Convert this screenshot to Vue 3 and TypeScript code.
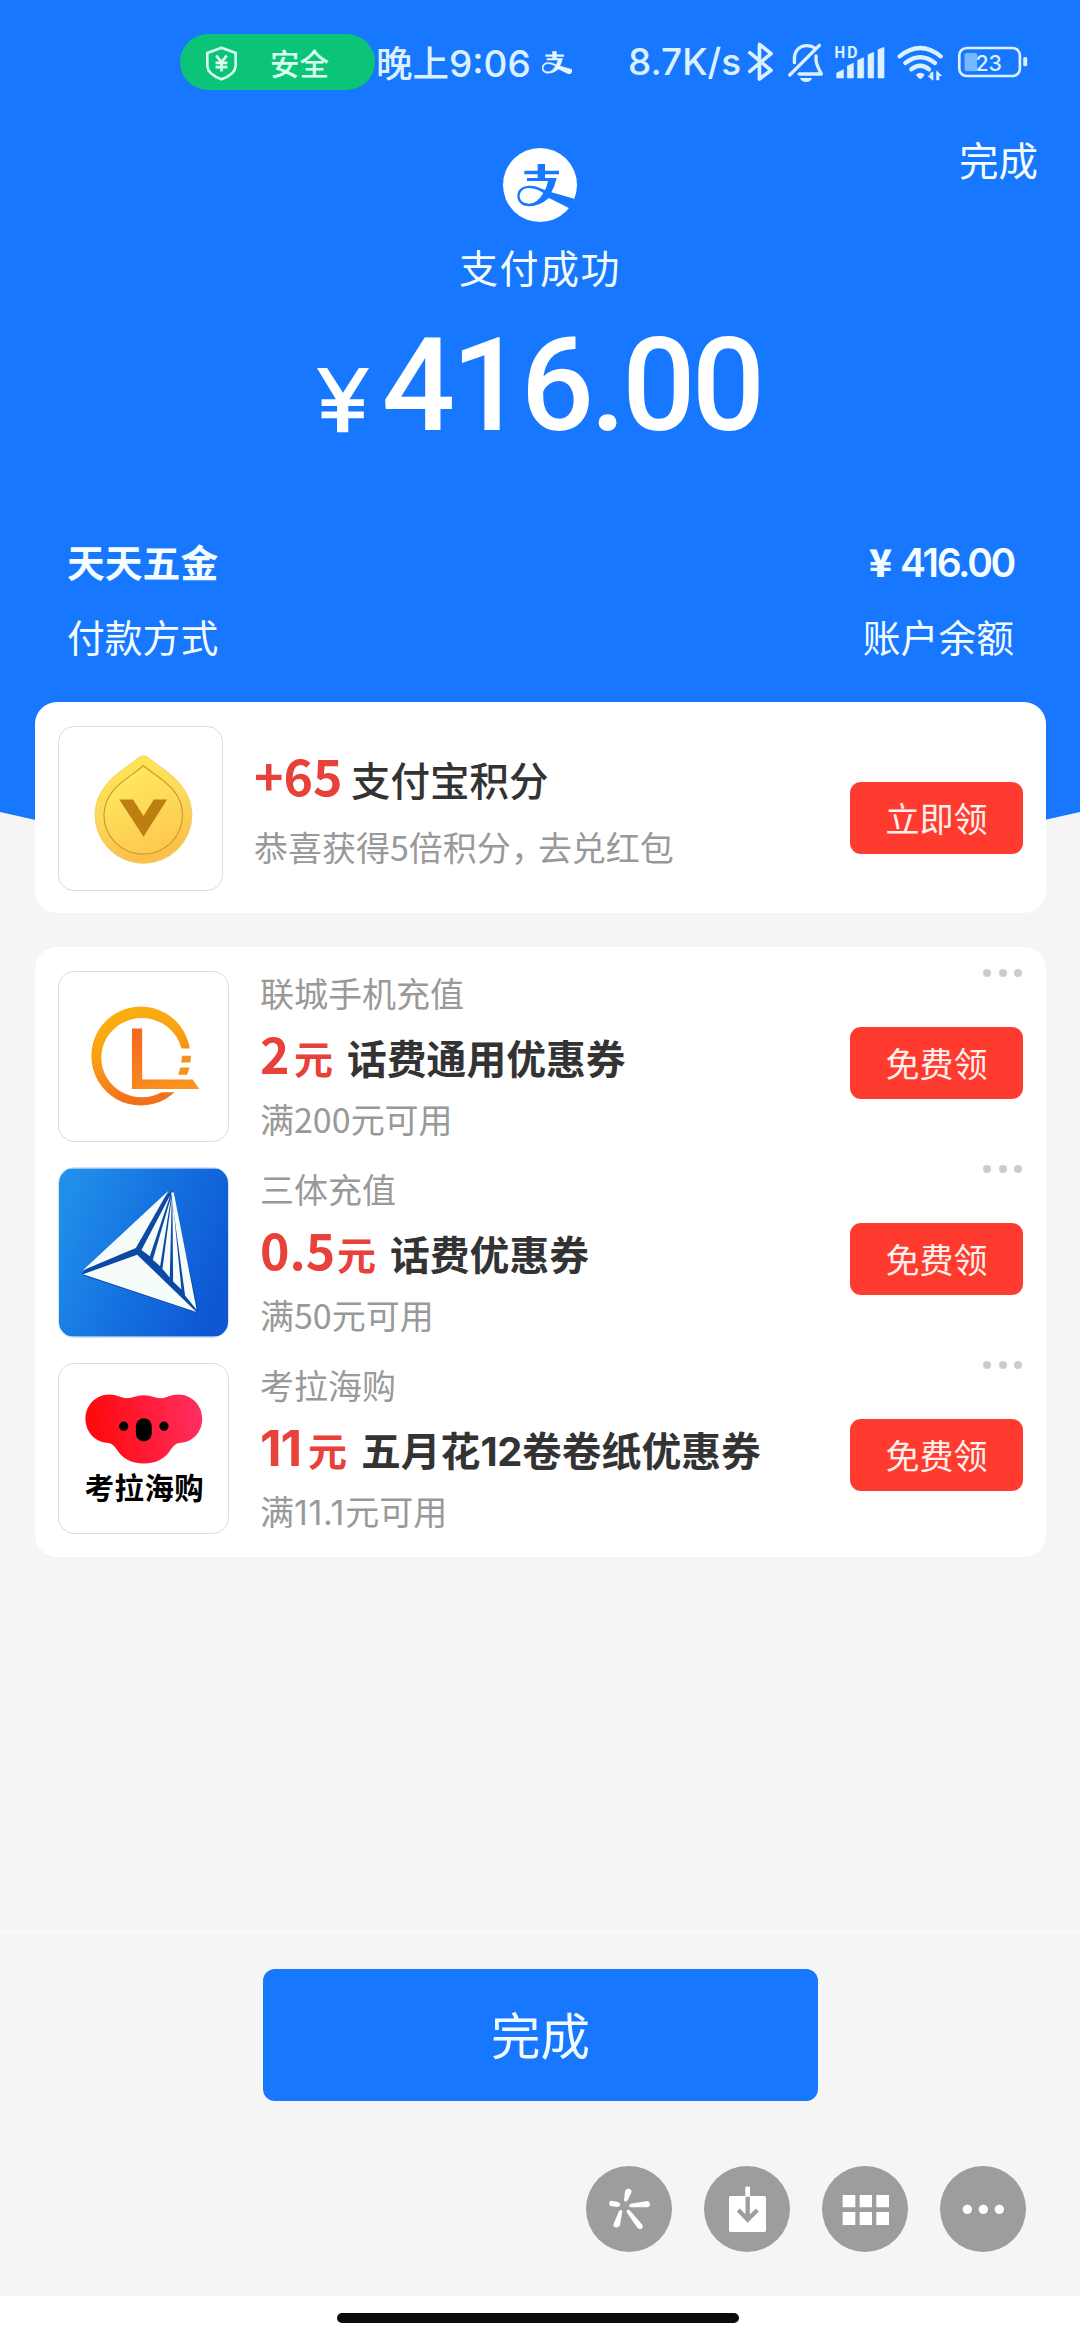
<script setup lang="ts">
interface Coupon {
  id: 'liancheng' | 'santi' | 'kaola'
  shop: string
  amount: string
  title: string
  rule: string
}

const coupons: Coupon[] = [
  { id: 'liancheng', shop: '联城手机充值', amount: '2', title: '话费通用优惠券', rule: '满200元可用' },
  { id: 'santi', shop: '三体充值', amount: '0.5', title: '话费优惠券', rule: '满50元可用' },
  { id: 'kaola', shop: '考拉海购', amount: '11', title: '五月花12卷卷纸优惠券', rule: '满11.1元可用' },
]

// Splits a label into runs so that numerals with a narrow "1" get their own face
const runs = (text: string): { text: string; narrow: boolean }[] =>
  text
    .split(/([\d.]+)/)
    .filter(Boolean)
    .map((part) => ({ text: part, narrow: /^1[\d.]*$/.test(part) }))

// Alipay mark: top cross, then the looped stroke with its counter
const markTop = 'M740 102H762V122H804V133H762V144H797Q791 170 781 187L862 210L838 236L774 204Q745 229 715 229C690 229 679 213 679 198C679 180 692 169 712 167C730 166 745 172 762 180Q768 168 771 153H708V144H740V133H700V122H740Z'
const markHole = 'M686 199C686 184 698 174 714 174C730 174 745 181 757 189Q738 221 715 221C698 221 686 213 686 199Z'
const markSmall = markTop + markHole
</script>

<template>
  <main class="screen">
    <section class="hero">
      <div class="status">
        <div class="pill">
          <svg class="shield" viewBox="136 75 94 104">
            <path d="M183 79L226 95V135Q224 160 183 175Q142 160 140 135V95Z" fill="none" stroke="#d9fff0" stroke-width="8" stroke-linejoin="round" />
            <path d="M167 103L183 123L199 103M183 123V151M165 125H201M165 138H201" fill="none" stroke="#d9fff0" stroke-width="8" />
          </svg>
          <span>安全</span>
        </div>
        <span class="clock">晚上<i>9:06</i></span>
        <svg class="mini-mark" viewBox="679 102 173 130"><path :d="markSmall" fill="#e6f7ff" stroke="#e6f7ff" stroke-width="3" fill-rule="evenodd" /></svg>
        <span class="speed">8.7K/s</span>
        <svg class="radios" viewBox="410 60 845 130">
          <g fill="none" stroke="#dcf1ff" stroke-width="11" stroke-linejoin="round" stroke-linecap="round">
            <path d="M418 98L482 151L447 177V73L482 101L418 154" />
            <path d="M538 165L627 76M552 128V116C552 92 568 77 589 77C598 77 605 79 611 83M617 108V122Q619 137 633 162H566" stroke-width="10" />
          </g>
          <path d="M569 174H605Q601 186 587 186Q573 186 569 174Z" fill="#dcf1ff" />
          <text x="671" y="114" class="hd" textLength="71">HD</text>
          <g fill="#dcf1ff">
            <path d="M679 159L699 149V174H679ZM711 138L729 130V174H711ZM742 121L760 113V174H742ZM773 104L790 97V174H773ZM803 89L821 82V174H803Z" stroke="#dcf1ff" stroke-width="2" />
            <path d="M918 163Q930 153 942 163Q944 168 930 178Q916 168 918 163Z" />
            <path d="M968 156V181L953 168H960V160ZM979 180V153L994 167H986V180Z" stroke="#dcf1ff" stroke-width="2" />
          </g>
          <g fill="none" stroke="#dcf1ff" stroke-width="13" stroke-linecap="round">
            <path d="M868 109Q930 59 991 109" />
            <path d="M885 129Q930 94 974 129" />
            <path d="M903 148Q930 127 956 148" />
          </g>
          <rect x="1047" y="84" width="182" height="84" rx="22" fill="none" stroke="#dcf1ff" stroke-width="8" />
          <rect x="1063" y="99" width="38" height="55" rx="7" fill="#77b9ff" />
          <text x="1096" y="152" class="level" textLength="79">23</text>
          <rect x="1239" y="111" width="12" height="28" rx="5" fill="#dcf1ff" />
        </svg>
      </div>

      <div class="top-action">完成</div>
      <div class="result">
        <svg class="logo" viewBox="636 54 222 222">
          <circle cx="747" cy="165" r="111" fill="#fff" />
          <path :d="markTop" fill="#1777ff" />
          <path :d="markHole" fill="#fff" />
        </svg>
        <p class="success">支付成功</p>
        <p class="total">
          <svg viewBox="76 708 162 200"><path d="M92 816H220M92 853H220" fill="none" stroke="#fff" stroke-width="20" /><path d="M78 711H109L157 786L205 711H236L173 812V906H139V812Z" fill="#fff" /></svg>
          <span>416.00</span>
        </p>
      </div>

      <div class="detail strong"><span>天天五金</span><span><b>¥</b><span class="money">416.00</span></span></div>
      <div class="detail"><span>付款方式</span><span>账户余额</span></div>
    </section>

    <section class="card points">
      <div class="thumb small">
        <svg viewBox="58 726 165 165">
          <defs>
            <linearGradient id="coin" x1="0" y1="0" x2="0.25" y2="1">
              <stop offset="0" stop-color="#ffe84e" />
              <stop offset="0.55" stop-color="#fcd95c" />
              <stop offset="1" stop-color="#fbc04a" />
            </linearGradient>
            <linearGradient id="face" x1="0.2" y1="0" x2="0.6" y2="1">
              <stop offset="0" stop-color="#ffec62" />
              <stop offset="1" stop-color="#fdc84e" />
            </linearGradient>
          </defs>
          <path d="M138 757.500Q143.500 753 149 757.500C162 769 192 782 192.500 815A49 49 0 0 1 94.500 815C95 782 125 769 138 757.500Z" fill="url(#coin)" stroke="#f3cf6c" stroke-width="1" />
          <path d="M143.500 765C156 777 183 787 183 815A39.750 39.750 0 0 1 103.500 815C104 787 131 777 143.500 765Z" fill="url(#face)" stroke="#cf9a2b" stroke-width="1.200" />
          <path d="M119 799.500H133L143.500 816L154 799.500H167.500L143.500 837Z" fill="#bd7f12" />
        </svg>
      </div>
      <div class="points-text">
        <p class="points-title"><em>+65</em>支付宝积分</p>
        <p class="grey">恭喜获得5倍积分<span class="comma">，</span>去兑红包</p>
      </div>
      <button class="claim">立即领</button>
    </section>

    <section class="card coupons">
      <article v-for="c in coupons" :key="c.id" class="coupon">
        <div class="thumb" :class="c.id">
          <svg v-if="c.id === 'liancheng'" viewBox="85 124 512 511">
            <defs>
              <linearGradient id="ring" x1="0" y1="0" x2="0.3" y2="1">
                <stop offset="0" stop-color="#fbb40c" />
                <stop offset="0.5" stop-color="#f9a015" />
                <stop offset="1" stop-color="#f26f1c" />
              </linearGradient>
              <linearGradient id="ell" x1="0" y1="0" x2="0.6" y2="1">
                <stop offset="0" stop-color="#f4661f" />
                <stop offset="1" stop-color="#fb931c" />
              </linearGradient>
            </defs>
            <path d="M333 228A150 150 0 1 1 332.900 228ZM336 263A123 120 0 1 0 336.100 263Z" fill="url(#ring)" fill-rule="evenodd" />
            <path d="M390 355H500V488H390Z" fill="#fff" />
            <path d="M306 295H337V449H490L510 478H306Z" fill="url(#ell)" />
            <path d="M458 377H485L483 398H455ZM453 413H481L473 435H446Z" fill="#f5921f" />
          </svg>
          <svg v-else-if="c.id === 'santi'" viewBox="87 55 508 505">
            <defs>
              <linearGradient id="sky" x1="0" y1="0.300" x2="1" y2="0.700">
                <stop offset="0" stop-color="#218eea" />
                <stop offset="0.5" stop-color="#1470df" />
                <stop offset="1" stop-color="#0e56d3" />
              </linearGradient>
            </defs>
            <rect x="87" y="55" width="508" height="505" fill="url(#sky)" />
            <path d="M427 121L157 368L160 377L502 489L505 476Z" fill="#0b49a5" />
            <g fill="#f6fcfa">
              <path d="M416 122L159 361L318 294Z" />
              <path d="M159 373L322 314L500 486Z" />
              <path d="M422 134L335 300L360 319Z" />
              <path d="M424 140L369 329L391 349Z" />
              <path d="M426 142L398 357L420 383Z" />
              <path d="M428 142L430 395L455 419Z" />
              <path d="M424 127L432 127L501 480L466 437Z" />
            </g>
          </svg>
          <svg v-else viewBox="85 640 512 511">
            <defs>
              <linearGradient id="koala" x1="0" y1="0.500" x2="1" y2="0.400">
                <stop offset="0.1" stop-color="#fd0b10" />
                <stop offset="1" stop-color="#ff2e62" />
              </linearGradient>
            </defs>
            <path d="M237 732C262 732 272 743 290 743C310 743 318 734 342 734C366 734 375 743 395 743C412 743 422 732 447 732C487 732 519 765 519 805C519 845 490 875 455 878C440 880 435 883 425 897C408 926 380 941 342 941C304 941 276 926 259 897C249 883 244 880 230 878C195 875 165 845 165 805C165 765 197 732 237 732Z" fill="url(#koala)" />
            <rect x="318" y="804" width="48" height="70" rx="24" />
            <circle cx="281" cy="828" r="14" />
            <circle cx="403" cy="828" r="14" />
            <text x="163" y="1050" class="kaola-name" textLength="360">考拉海购</text>
          </svg>
        </div>
        <div class="coupon-text">
          <p class="grey">{{ c.shop }}</p>
          <p class="offer">
            <em :class="'amt-' + c.id">{{ c.amount }}</em><i>元</i>
            <strong><span v-for="(r, n) in runs(c.title)" :key="n" :class="{ narrow: r.narrow }">{{ r.text }}</span></strong>
          </p>
          <p class="grey"><span v-for="(r, n) in runs(c.rule)" :key="n" :class="{ narrow: r.narrow }">{{ r.text }}</span></p>
        </div>
        <div class="side">
          <div class="more"><span v-for="n in 3" :key="n" /></div>
          <button class="claim">免费领</button>
        </div>
      </article>
    </section>

    <section class="footer">
      <button class="done">完成</button>
      <div class="tools">
        <svg viewBox="78 78 258 258">
          <circle cx="207" cy="207" r="129" />
          <g fill="#fff">
            <path d="M192 181Q196 189 202 182L214 158Q217 147 206 146Q197 146 195 154Z" />
            <path d="M151 182Q144 190 151 198L171 201Q182 200 181 191Q176 184 151 182Z" />
            <path d="M262 183L212 191Q203 197 211 202L262 202Q270 201 270 192Q269 184 262 183Z" />
            <path d="M187 212Q182 207 177 213L161 251Q158 261 168 262Q176 263 180 256Z" />
            <path d="M201 211Q206 207 211 213L247 254Q251 263 243 267Q236 269 231 262L202 220Q198 215 201 211Z" />
          </g>
        </svg>
        <svg viewBox="432 78 258 258">
          <circle cx="561" cy="207" r="129" />
          <rect x="507" y="168" width="111" height="108" rx="5" fill="#fff" />
          <rect x="556" y="140" width="14" height="29" fill="#fff" />
          <path d="M563 170V238M535 210L563 239L592 210" fill="none" stroke="#9d9d9d" stroke-width="13" />
        </svg>
        <svg viewBox="786 78 258 258">
          <circle cx="915" cy="207" r="129" />
          <path d="M848 165H886V202H848ZM899 165H936V202H899ZM949 165H987V202H949ZM848 216H886V255H848ZM899 216H936V255H899ZM949 216H987V255H949Z" fill="#fff" />
        </svg>
        <svg viewBox="1140 78 258 258">
          <circle cx="1269" cy="207" r="129" />
          <g fill="#fff"><circle cx="1222" cy="208" r="14" /><circle cx="1270" cy="208" r="14" /><circle cx="1318" cy="208" r="14" /></g>
        </svg>
      </div>
    </section>

    <div class="home"><span /></div>
  </main>
</template>

<style>
body {
  margin: 0;
  background: #f5f5f5;
}
</style>

<style scoped>
.screen {
  display: flex;
  flex-direction: column;
  width: 1080px;
  height: 2340px;
  overflow: hidden;
  background: #f5f5f5;
  font-family: "Noto Sans CJK SC", sans-serif;
}
p {
  margin: 0;
}
i,
em {
  font-style: normal;
}
button {
  border: 0;
  padding: 0;
  color: #fff;
  font-family: inherit;
}
svg {
  display: block;
}
.hero {
  flex: none;
  height: 840px;
  margin-bottom: -138px;
  background: #1777ff;
  clip-path: polygon(0 0, 100% 0, 100% 812px, 1040px 821px, 960px 840px, 120px 840px, 40px 821px, 0 812px);
  color: #f4fdff;
}
.status {
  display: flex;
  align-items: center;
  height: 124px;
  padding-left: 180px;
  color: #dcf1ff;
}
.pill {
  display: flex;
  align-items: center;
  width: 195px;
  height: 56px;
  border-radius: 28px;
  background: #0bc477;
  color: #d9fff0;
  font-size: 29.500px;
  font-weight: 500;
}
.shield {
  width: 31px;
  height: 35px;
  margin: 2px 33px 0 26px;
}
.pill span {
  line-height: 50px;
}
.clock {
  width: 166px;
  margin-left: 1px;
  font-size: 36.500px;
  font-weight: 500;
  line-height: 58px;
  white-space: nowrap;
}
.clock i {
  font-family: Inter, sans-serif;
  font-size: 37px;
  line-height: 1;
}
.mini-mark {
  width: 30px;
  height: 23px;
}
.speed {
  width: 119px;
  margin-left: 56px;
  font: 500 37px/60px Inter, sans-serif;
  white-space: nowrap;
}
.radios {
  width: 281.700px;
  height: 43.300px;
}
.hd {
  fill: #dcf1ff;
  font: 700 46px "Noto Sans CJK SC", sans-serif;
}
.level {
  fill: #dcf1ff;
  font: 500 64px Inter, sans-serif;
}
.top-action {
  height: 24px;
  padding-right: 42px;
  text-align: right;
  font-size: 39.500px;
  line-height: 70px;
}
.result {
  display: flex;
  flex-direction: column;
  align-items: center;
  height: 389px;
}
.logo {
  width: 74px;
  height: 74px;
}
.success {
  height: 58px;
  margin-top: 15px;
  font-size: 39px;
  line-height: 58px;
  letter-spacing: 1.500px;
}
.total {
  display: flex;
  align-items: flex-end;
  height: 94px;
  margin-top: 44px;
  padding-right: 3px;
  color: #fff;
}
.total svg {
  width: 54px;
  height: 66px;
  margin: 0 12px 0 0;
}
.total span {
  font: 500 129px/94px Roboto, sans-serif;
  letter-spacing: -3.800px;
}
.detail {
  display: flex;
  justify-content: space-between;
  height: 75px;
  padding: 0 66px 0 67px;
  font-size: 37.800px;
  line-height: 48px;
}
.strong {
  font-weight: 700;
}
.strong b {
  margin-right: 8px;
}
.money {
  font: 600 39px/1 Inter, sans-serif;
  letter-spacing: -2.300px;
}
.card {
  position: relative;
  flex: none;
  width: 1011px;
  margin-left: 35px;
  box-sizing: border-box;
  border-radius: 22px;
  background: #fff;
}
.points {
  display: flex;
  height: 211px;
  margin-bottom: 34px;
  padding: 24px 23px;
}
.thumb {
  flex: none;
  width: 171px;
  height: 171px;
  box-sizing: border-box;
  border: 1px solid #dcdcdc;
  border-radius: 16px;
  overflow: hidden;
}
.thumb.small {
  width: 165px;
  height: 165px;
}
.thumb.santi {
  border-color: #cfe3fb;
}
.thumb svg {
  width: 100%;
  height: 100%;
}
.points-text {
  flex: 1;
  padding: 18px 0 0 31px;
}
.points-title {
  display: flex;
  align-items: baseline;
  height: 78px;
  color: #333;
  font-size: 39.500px;
  font-weight: 500;
  line-height: 60px;
}
.points-title em {
  width: 97px;
  color: #e8413a;
  font-size: 50px;
  font-weight: 700;
}
.grey {
  color: #999;
  font-size: 34px;
  line-height: 50px;
  white-space: nowrap;
}
.comma {
  letter-spacing: -7px;
}
.claim {
  flex: none;
  width: 173px;
  height: 72px;
  border-radius: 11px;
  background: #ff3b30;
  color: #fff1ee;
  font-size: 34px;
  line-height: 68px;
}
.points .claim {
  margin-top: 56px;
}
.coupons {
  height: 610px;
  padding: 24px 23px 0;
}
.coupon {
  display: flex;
  height: 196px;
}
.coupon-text {
  flex: 1;
  padding-left: 31px;
}
.coupon-text .grey {
  margin-top: -3px;
}
.offer {
  display: flex;
  align-items: baseline;
  height: 79px;
  color: #333;
  line-height: 68px;
  white-space: nowrap;
}
.offer em {
  width: 34px;
  color: #e8413a;
  font-size: 50px;
  font-weight: 700;
}
.offer .amt-santi {
  width: 77px;
}
.offer .amt-kaola {
  width: 48px;
  padding-top: 4px;
  font-family: Inter, sans-serif;
  letter-spacing: -1px;
}
.offer i {
  width: 53px;
  color: #e8413a;
  font-size: 39px;
  font-weight: 700;
}
.offer strong {
  font-size: 39.800px;
  font-weight: 700;
}
.narrow {
  font-family: Inter, sans-serif;
  line-height: 1;
  letter-spacing: -0.300px;
}
.grey .narrow {
  letter-spacing: 0.700px;
}
.side {
  width: 173px;
}
.more {
  display: flex;
  justify-content: flex-end;
  gap: 7.500px;
  height: 8px;
  margin: -2px 1px 50px 0;
}
.more span {
  width: 8px;
  height: 8px;
  border-radius: 50%;
  background: #ccc;
}
.kaola-name {
  font: 700 89px "Noto Sans CJK SC", sans-serif;
}
.footer {
  flex: none;
  height: 363px;
  margin-top: 375px;
  border-top: 1px solid #fefefe;
}
.done {
  display: block;
  width: 555px;
  height: 132px;
  margin: 36px 0 65px 263px;
  padding-bottom: 3px;
  border-radius: 12px;
  background: #1777ff;
  color: #f0fcff;
  font-size: 49.500px;
  line-height: 124px;
}
.tools {
  display: flex;
  gap: 32px;
  margin-left: 586px;
}
.tools svg {
  width: 86px;
  height: 86px;
  fill: #9d9d9d;
}
.home {
  flex: 1;
  padding-top: 17px;
  background: #fff;
}
.home span {
  display: block;
  width: 402px;
  height: 10px;
  margin-left: 337px;
  border-radius: 5px;
  background: #0b0b0b;
}
</style>
